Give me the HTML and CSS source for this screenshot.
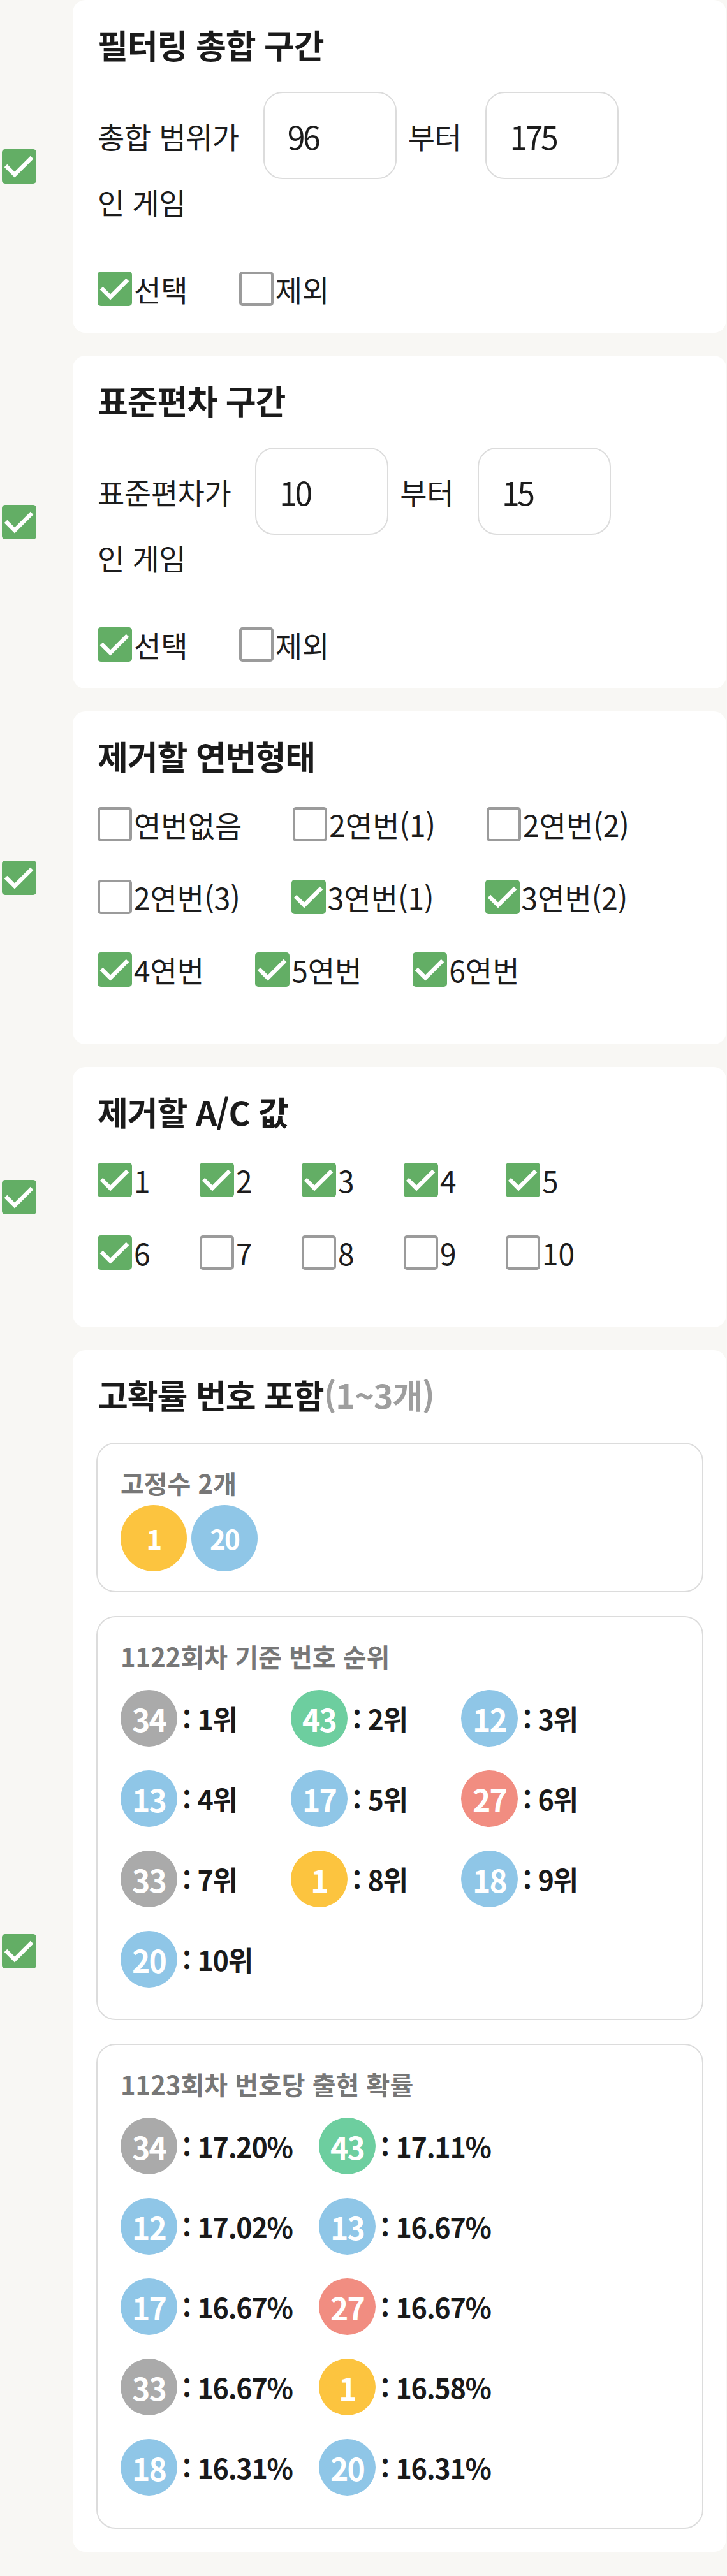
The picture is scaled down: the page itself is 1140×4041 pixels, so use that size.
FILE: index.html
```html
<!DOCTYPE html>
<html lang="ko">
<head>
<meta charset="utf-8">
<title>필터</title>
<link rel="stylesheet" href="styles.css">
</head>
<body>
<main class="page">

  <section class="filter">
    <div class="side"><span class="cb on"><svg viewBox="0 0 54 54"><polyline points="6,26 20,40 47,13"/></svg></span></div>
    <div class="card card-range">
      <h2 class="card-title">필터링 총합 구간</h2>
      <div class="range-row">
        <span class="range-label">총합 범위가</span>
        <input class="range-input" type="text" value="96">
        <span class="range-label">부터</span>
        <input class="range-input" type="text" value="175">
      </div>
      <div class="range-tail">인 게임</div>
      <div class="choice-row">
        <label class="opt"><span class="cb on"><svg viewBox="0 0 54 54"><polyline points="6,26 20,40 47,13"/></svg></span><span class="opt-label">선택</span></label>
        <label class="opt"><span class="cb off"></span><span class="opt-label">제외</span></label>
      </div>
    </div>
  </section>

  <section class="filter">
    <div class="side"><span class="cb on"><svg viewBox="0 0 54 54"><polyline points="6,26 20,40 47,13"/></svg></span></div>
    <div class="card card-range">
      <h2 class="card-title">표준편차 구간</h2>
      <div class="range-row">
        <span class="range-label">표준편차가</span>
        <input class="range-input" type="text" value="10">
        <span class="range-label">부터</span>
        <input class="range-input" type="text" value="15">
      </div>
      <div class="range-tail">인 게임</div>
      <div class="choice-row">
        <label class="opt"><span class="cb on"><svg viewBox="0 0 54 54"><polyline points="6,26 20,40 47,13"/></svg></span><span class="opt-label">선택</span></label>
        <label class="opt"><span class="cb off"></span><span class="opt-label">제외</span></label>
      </div>
    </div>
  </section>

  <section class="filter">
    <div class="side"><span class="cb on"><svg viewBox="0 0 54 54"><polyline points="6,26 20,40 47,13"/></svg></span></div>
    <div class="card card-opts">
      <h2 class="card-title">제거할 연번형태</h2>
      <div class="opt-rows">
        <div class="opt-row">
          <label class="opt"><span class="cb off"></span><span class="opt-label">연번없음</span></label>
          <label class="opt"><span class="cb off"></span><span class="opt-label">2연번(1)</span></label>
          <label class="opt"><span class="cb off"></span><span class="opt-label">2연번(2)</span></label>
        </div>
        <div class="opt-row">
          <label class="opt"><span class="cb off"></span><span class="opt-label">2연번(3)</span></label>
          <label class="opt"><span class="cb on"><svg viewBox="0 0 54 54"><polyline points="6,26 20,40 47,13"/></svg></span><span class="opt-label">3연번(1)</span></label>
          <label class="opt"><span class="cb on"><svg viewBox="0 0 54 54"><polyline points="6,26 20,40 47,13"/></svg></span><span class="opt-label">3연번(2)</span></label>
        </div>
        <div class="opt-row">
          <label class="opt"><span class="cb on"><svg viewBox="0 0 54 54"><polyline points="6,26 20,40 47,13"/></svg></span><span class="opt-label">4연번</span></label>
          <label class="opt"><span class="cb on"><svg viewBox="0 0 54 54"><polyline points="6,26 20,40 47,13"/></svg></span><span class="opt-label">5연번</span></label>
          <label class="opt"><span class="cb on"><svg viewBox="0 0 54 54"><polyline points="6,26 20,40 47,13"/></svg></span><span class="opt-label">6연번</span></label>
        </div>
      </div>
    </div>
  </section>

  <section class="filter">
    <div class="side"><span class="cb on"><svg viewBox="0 0 54 54"><polyline points="6,26 20,40 47,13"/></svg></span></div>
    <div class="card card-opts">
      <h2 class="card-title">제거할 A/C 값</h2>
      <div class="ac-grid">
        <label class="opt"><span class="cb on"><svg viewBox="0 0 54 54"><polyline points="6,26 20,40 47,13"/></svg></span><span class="opt-label">1</span></label>
        <label class="opt"><span class="cb on"><svg viewBox="0 0 54 54"><polyline points="6,26 20,40 47,13"/></svg></span><span class="opt-label">2</span></label>
        <label class="opt"><span class="cb on"><svg viewBox="0 0 54 54"><polyline points="6,26 20,40 47,13"/></svg></span><span class="opt-label">3</span></label>
        <label class="opt"><span class="cb on"><svg viewBox="0 0 54 54"><polyline points="6,26 20,40 47,13"/></svg></span><span class="opt-label">4</span></label>
        <label class="opt"><span class="cb on"><svg viewBox="0 0 54 54"><polyline points="6,26 20,40 47,13"/></svg></span><span class="opt-label">5</span></label>
        <label class="opt"><span class="cb on"><svg viewBox="0 0 54 54"><polyline points="6,26 20,40 47,13"/></svg></span><span class="opt-label">6</span></label>
        <label class="opt"><span class="cb off"></span><span class="opt-label">7</span></label>
        <label class="opt"><span class="cb off"></span><span class="opt-label">8</span></label>
        <label class="opt"><span class="cb off"></span><span class="opt-label">9</span></label>
        <label class="opt"><span class="cb off"></span><span class="opt-label">10</span></label>
      </div>
    </div>
  </section>

  <section class="filter">
    <div class="side"><span class="cb on"><svg viewBox="0 0 54 54"><polyline points="6,26 20,40 47,13"/></svg></span></div>
    <div class="card card-prob">
      <h2 class="card-title">고확률 번호 포함<span class="title-note">(1~3개)</span></h2>

      <div class="sub-box box-fixed">
        <h3 class="sub-title">고정수 2개</h3>
        <div class="fixed-balls">
          <span class="ball big yellow">1</span>
          <span class="ball big blue">20</span>
        </div>
      </div>

      <div class="sub-box box-list">
        <h3 class="sub-title">1122회차 기준 번호 순위</h3>
        <div class="rank-grid">
          <div class="num-item"><span class="ball gray">34</span><span class="num-label">: 1위</span></div>
          <div class="num-item"><span class="ball green">43</span><span class="num-label">: 2위</span></div>
          <div class="num-item"><span class="ball blue">12</span><span class="num-label">: 3위</span></div>
          <div class="num-item"><span class="ball blue">13</span><span class="num-label">: 4위</span></div>
          <div class="num-item"><span class="ball blue">17</span><span class="num-label">: 5위</span></div>
          <div class="num-item"><span class="ball red">27</span><span class="num-label">: 6위</span></div>
          <div class="num-item"><span class="ball gray">33</span><span class="num-label">: 7위</span></div>
          <div class="num-item"><span class="ball yellow">1</span><span class="num-label">: 8위</span></div>
          <div class="num-item"><span class="ball blue">18</span><span class="num-label">: 9위</span></div>
          <div class="num-item"><span class="ball blue">20</span><span class="num-label">: 10위</span></div>
        </div>
      </div>

      <div class="sub-box box-list box-last">
        <h3 class="sub-title">1123회차 번호당 출현 확률</h3>
        <div class="prob-grid">
          <div class="num-item"><span class="ball gray">34</span><span class="num-label">: 17.20%</span></div>
          <div class="num-item"><span class="ball green">43</span><span class="num-label">: 17.11%</span></div>
          <div class="num-item"><span class="ball blue">12</span><span class="num-label">: 17.02%</span></div>
          <div class="num-item"><span class="ball blue">13</span><span class="num-label">: 16.67%</span></div>
          <div class="num-item"><span class="ball blue">17</span><span class="num-label">: 16.67%</span></div>
          <div class="num-item"><span class="ball red">27</span><span class="num-label">: 16.67%</span></div>
          <div class="num-item"><span class="ball gray">33</span><span class="num-label">: 16.67%</span></div>
          <div class="num-item"><span class="ball yellow">1</span><span class="num-label">: 16.58%</span></div>
          <div class="num-item"><span class="ball blue">18</span><span class="num-label">: 16.31%</span></div>
          <div class="num-item"><span class="ball blue">20</span><span class="num-label">: 16.31%</span></div>
        </div>
      </div>
    </div>
  </section>

</main>
</body>
</html>
```

FILE: styles.css
```css
* {
  box-sizing: border-box;
}

html, body {
  margin: 0;
  padding: 0;
  background: #f8f7f4;
}

body {
  font-family: "Noto Sans CJK KR", "Noto Sans", sans-serif;
  color: #1c1c1c;
}

.page {
  padding-bottom: 37px;
}

.filter {
  display: flex;
  align-items: center;
}

.filter + .filter {
  margin-top: 36px;
}

.side {
  width: 114px;
  flex: none;
  display: flex;
  align-items: center;
}

.side .cb {
  margin-left: 3px;
}

/* checkbox */
.cb {
  width: 54px;
  height: 54px;
  flex: none;
  border-radius: 5px;
  display: inline-flex;
}

.cb.on {
  background: #63ae65;
}

.cb.on svg {
  width: 54px;
  height: 54px;
}

.cb.on polyline {
  fill: none;
  stroke: #ffffff;
  stroke-width: 6.5;
  stroke-linecap: butt;
  stroke-linejoin: miter;
}

.cb.off {
  background: #ffffff;
  border: 4px solid #9b9b9b;
}

/* card */
.card {
  flex: 1;
  margin-right: 1px;
  background: #ffffff;
  border-radius: 20px;
  padding: 40px 39px 42px 39px;
}

.card-opts {
  padding-bottom: 90px;
}

.card-prob {
  padding-bottom: 36px;
}

.card-title {
  margin: 0;
  font-size: 52px;
  line-height: 60px;
  font-weight: 700;
  letter-spacing: -0.02em;
  color: #1b1b1b;
  white-space: nowrap;
}

.title-note {
  color: #9e9e9e;
  font-weight: 700;
}

/* range cards */
.range-row {
  margin-top: 44px;
  display: flex;
  align-items: center;
}

.range-label {
  font-size: 46px;
  letter-spacing: -0.01em;
  line-height: 60px;
  white-space: nowrap;
}

.range-input {
  width: 209px;
  height: 137px;
  margin: 0 18px 0 38px;
  padding: 0 0 0 36px;
  border: 2px solid #dcdcdc;
  border-radius: 30px;
  background: #ffffff;
  font-family: "Noto Sans CJK KR", "Noto Sans", sans-serif;
  font-size: 50px;
  letter-spacing: -0.07em;
  color: #1c1c1c;
  outline: none;
}

.range-tail {
  font-size: 46px;
  letter-spacing: -0.01em;
  line-height: 70px;
}

.choice-row {
  margin-top: 75px;
  display: flex;
  gap: 80px;
}

/* options */
.opt {
  display: flex;
  align-items: center;
  height: 54px;
}

.opt-label {
  margin-left: 3px;
  font-size: 46px;
  line-height: 54px;
  letter-spacing: 0;
  white-space: nowrap;
}

.opt-rows {
  margin-top: 50px;
  display: flex;
  flex-direction: column;
  gap: 60px;
}

.opt-row {
  display: flex;
  gap: 80px;
}

.ac-grid {
  margin-top: 50px;
  display: grid;
  grid-template-columns: repeat(5, 160px);
  row-gap: 60px;
}

/* sub boxes */
.sub-box {
  margin: 45px -3px 0 -2px;
  border: 2px solid #dcdcdc;
  border-radius: 30px;
  padding: 36px 36px 49px 36px;
}

.sub-box + .sub-box {
  margin-top: 37px;
}

.box-fixed {
  padding-bottom: 31px;
}

.box-last {
  padding-bottom: 50px;
}

.sub-title {
  margin: 0;
  font-size: 40px;
  line-height: 50px;
  font-weight: 700;
  letter-spacing: 0;
  color: #777777;
  white-space: nowrap;
}

.fixed-balls {
  margin-top: 10px;
  display: flex;
  gap: 7px;
}

.ball {
  width: 89px;
  height: 89px;
  flex: none;
  border-radius: 50%;
  display: flex;
  align-items: center;
  justify-content: center;
  color: #ffffff;
  font-size: 48px;
  font-weight: 700;
  letter-spacing: -0.04em;
  line-height: 1;
}

.ball.big {
  width: 104px;
  height: 104px;
  font-size: 42px;
}

.yellow { background: #fcc43f; }
.blue { background: #8fc6e7; }
.red { background: #f18d81; }
.gray { background: #aaaaaa; }
.green { background: #6dce9f; }

.rank-grid {
  margin-top: 28px;
  display: grid;
  grid-template-columns: repeat(3, 267px);
  row-gap: 37px;
}

.prob-grid {
  margin-top: 28px;
  display: grid;
  grid-template-columns: repeat(2, 311px);
  row-gap: 37px;
}

.num-item {
  display: flex;
  align-items: center;
}

.num-label {
  margin-left: 8px;
  font-size: 43px;
  font-weight: 700;
  letter-spacing: -0.03em;
  line-height: 1;
  white-space: nowrap;
  color: #1a1a1a;
}
```
